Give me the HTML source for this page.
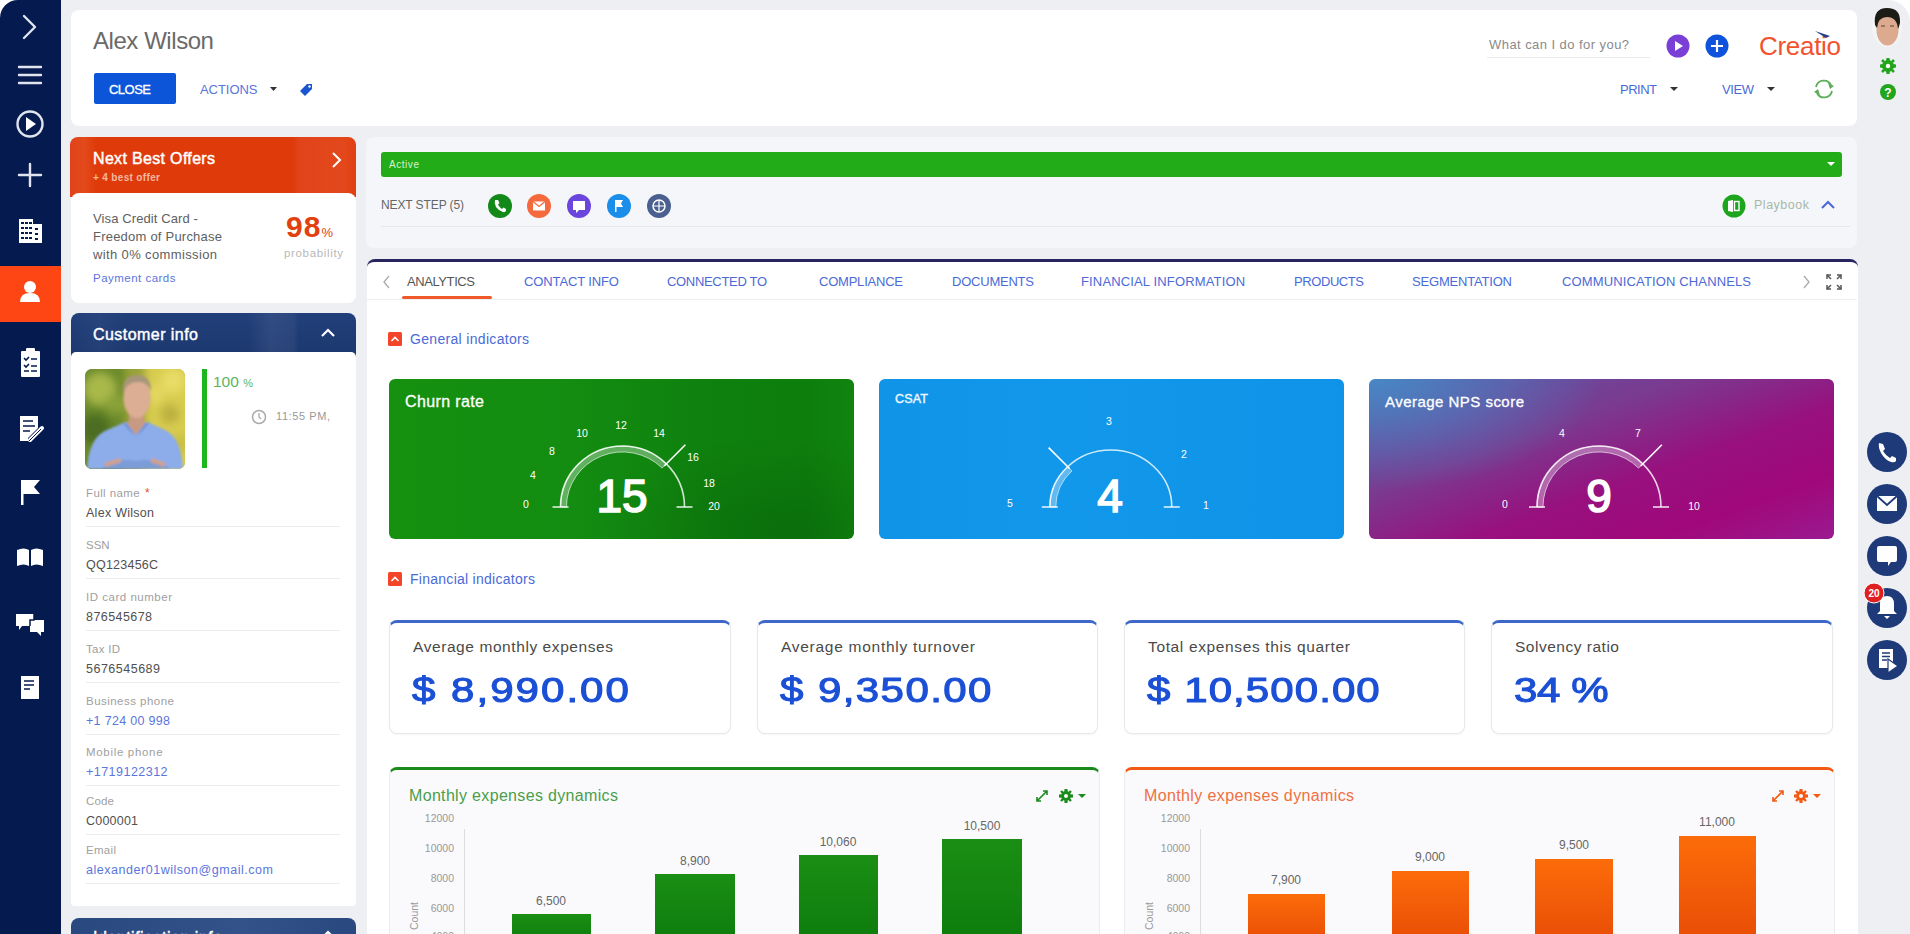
<!DOCTYPE html>
<html><head><meta charset="utf-8">
<style>
*{box-sizing:border-box;margin:0;padding:0}
html,body{width:1910px;height:934px;overflow:hidden;background:#edeff2;font-family:"Liberation Sans",sans-serif;}
.a{position:absolute}
.card{position:absolute;background:#fff;border-radius:8px}
.t{position:absolute;white-space:nowrap;line-height:1}
</style></head><body>
<!-- left sidebar -->
<div class="a" style="left:0;top:0;width:24px;height:24px;background:#fff"></div>
<div class="a" style="left:0;top:0;width:61px;height:934px;background:#051a4e;border-top-left-radius:18px"></div>
<div class="a" style="left:0;top:266px;width:61px;height:56px;background:#fd4614"></div>
<svg class="a" style="left:0;top:0" width="62" height="720" viewBox="0 0 62 720">
<g fill="none" stroke="#dfe4ee" stroke-width="2.4" stroke-linecap="round" stroke-linejoin="round">
<path d="M24 16 L35 27 L24 38"></path>
<path d="M19 67 H41 M19 75 H41 M19 83 H41"></path>
<circle cx="30" cy="124" r="12.5"></circle>
<path d="M19 175 H41 M30 164 V186"></path>
</g>
<path fill="#fff" d="M26 131 L26 117 L36 124 Z"></path>
<!-- building -->
<g fill="#fff"><rect x="19" y="219" width="14" height="24"></rect><rect x="33" y="224" width="9" height="19"></rect></g>
<g fill="#051a4e"><rect x="21" y="222" width="3" height="2"></rect><rect x="25" y="222" width="3" height="2"></rect><rect x="29" y="222" width="3" height="2"></rect>
<rect x="21" y="227" width="3" height="2"></rect><rect x="25" y="227" width="3" height="2"></rect><rect x="29" y="227" width="3" height="2"></rect>
<rect x="21" y="232" width="3" height="2"></rect><rect x="25" y="232" width="3" height="2"></rect><rect x="29" y="232" width="3" height="2"></rect>
<rect x="21" y="237" width="3" height="2"></rect><rect x="25" y="237" width="3" height="2"></rect><rect x="29" y="237" width="3" height="2"></rect>
<rect x="35" y="228" width="3" height="2"></rect><rect x="35" y="233" width="3" height="2"></rect><rect x="35" y="238" width="3" height="2"></rect></g>
<!-- person -->
<g fill="#fff"><circle cx="30" cy="287" r="6"></circle><path d="M20 302 Q20 293 30 293 Q40 293 40 302 Z"></path></g>
<!-- clipboard -->
<g fill="#fff"><rect x="21" y="351" width="19" height="26" rx="1"></rect><rect x="26" y="348" width="9" height="5" rx="1"></rect></g>
<g stroke="#051a4e" stroke-width="1.6" fill="none"><path d="M24 358 l2 2 l3 -3 M31 359 H37 M24 365 l2 2 l3 -3 M31 366 H37 M24 371 H29 M31 371 H37"></path></g>
<!-- edit doc -->
<g fill="#fff"><path d="M20 416 H38 V428 L28 438 V441 H20 Z"></path></g>
<g stroke="#051a4e" stroke-width="1.6"><path d="M23 421 H33 M23 426 H35 M23 431 H30"></path></g>
<path d="M30 440 L42 428" stroke="#fff" stroke-width="4" stroke-linecap="round"></path>
<path d="M29 441 L41 429" stroke="#051a4e" stroke-width="1"></path>
<!-- flag -->
<g fill="#fff"><rect x="21" y="480" width="2.5" height="25"></rect><path d="M23 480 H40 L34 487 L40 494 H23 Z"></path></g>
<!-- book -->
<path fill="#fff" d="M17 550 Q24 547 29 550 V566 Q24 563 17 566 Z M31 550 Q36 547 43 550 V566 Q36 563 31 566 Z"></path>
<!-- chat -->
<g fill="#fff"><path d="M16 614 H34 V626 H22 L19 630 V626 H16 Z"></path><path d="M30 620 H44 V632 H41 V636 L37 632 H30 Z"></path></g>
<path d="M34 614 V620 H30 V626" fill="none" stroke="#051a4e" stroke-width="1.5"></path>
<!-- doc -->
<g fill="#fff"><rect x="21" y="676" width="18" height="23"></rect></g>
<g stroke="#051a4e" stroke-width="1.6"><path d="M24 681 H34 M24 685 H34 M24 689 H30"></path></g>
</svg>

<!-- header card -->
<div class="card" style="left:71px;top:10px;width:1786px;height:116px;"></div>
<div class="t" style="left: 93px; top: 29px; font-size: 24px; color: rgb(106, 106, 106); letter-spacing: -0.44px;">Alex Wilson</div>
<div class="a" style="left:94px;top:73px;width:82px;height:31px;background:#0c55d8;border-radius:2px"></div>
<div class="t" style="left: 109px; top: 83px; font-size: 13px; color: rgb(255, 255, 255); -webkit-text-stroke: 0.3px rgb(255, 255, 255); letter-spacing: -0.52px;">CLOSE</div>
<div class="t" style="left: 200px; top: 83px; font-size: 13px; color: rgb(90, 116, 220); letter-spacing: -0.05px;">ACTIONS</div>
<svg class="a" style="left:269px;top:86px" width="10" height="6"><path d="M1 1 H8 L4.5 5 Z" fill="#333"></path></svg>
<svg class="a" style="left:298px;top:80px" width="18" height="18" viewBox="0 0 18 18"><path d="M2 11 L9 4 L14 4 L14 9 L7 16 Z" fill="#1a55d0"></path><circle cx="11.5" cy="6.5" r="1.2" fill="#fff"></circle></svg>
<div class="t" style="left: 1489px; top: 38px; font-size: 13px; color: rgb(138, 138, 138); letter-spacing: 0.44px;">What can I do for you?</div>
<div class="a" style="left:1487px;top:57px;width:163px;height:1px;background:#eaeaea"></div>
<svg class="a" style="left:1666px;top:34px" width="24" height="24" viewBox="0 0 24 24"><circle cx="12" cy="12" r="11.5" fill="#7a3fd6"></circle><path d="M9 7 L17 12 L9 17 Z" fill="#fff"></path></svg>
<svg class="a" style="left:1705px;top:34px" width="24" height="24" viewBox="0 0 24 24"><circle cx="12" cy="12" r="11.5" fill="#0f52dc"></circle><path d="M12 6 V18 M6 12 H18" stroke="#fff" stroke-width="2.2"></path></svg>
<div class="t" style="left: 1759px; top: 33px; font-size: 26px; color: rgb(242, 83, 46); letter-spacing: -0.3px;">Creatio</div>
<svg class="a" style="left:1814px;top:30px" width="18" height="10"><path d="M1 1 L16 6 L12 8 Z" fill="#263a8a"></path></svg>
<div class="t" style="left: 1620px; top: 83px; font-size: 13px; color: rgb(74, 106, 216); letter-spacing: -0.5px;">PRINT</div>
<svg class="a" style="left:1669px;top:86px" width="10" height="6"><path d="M1 1 H9 L5 5 Z" fill="#333"></path></svg>
<div class="t" style="left: 1722px; top: 83px; font-size: 13px; color: rgb(74, 106, 216); letter-spacing: -0.41px;">VIEW</div>
<svg class="a" style="left:1766px;top:86px" width="10" height="6"><path d="M1 1 H9 L5 5 Z" fill="#333"></path></svg>
<svg class="a" style="left:1812px;top:78px" width="24" height="22" viewBox="0 0 24 22"><g fill="none" stroke="#5cae5c" stroke-width="1.8"><path d="M4 9 A8 8 0 0 1 19 7"></path><path d="M20 13 A8 8 0 0 1 5 15"></path></g><path d="M16 5 L22 8 L18 11 Z M8 17 L2 14 L6 11 Z" fill="#5cae5c"></path></svg>

<!-- right strip -->
<div class="a" style="left:1885px;top:0;width:25px;height:25px;background:#fff"></div>
<div class="a" style="left:1858px;top:0;width:52px;height:60px;background:#edeff2;border-top-right-radius:22px"></div>
<svg class="a" style="left:1867px;top:3px" width="40" height="46" viewBox="0 0 40 46">
<defs><filter id="avb"><feGaussianBlur stdDeviation="0.7"></feGaussianBlur></filter></defs>
<ellipse cx="20" cy="24" rx="15" ry="20" fill="#f4f4f6"></ellipse>
<g filter="url(#avb)">
<ellipse cx="20.5" cy="27" rx="11" ry="15.5" fill="#dcaa8e"></ellipse>
<path d="M8 22 Q6 5 20 5 Q34 5 33 20 Q32 24 31 26 Q30 14 20 14 Q11 14 10 25 Z" fill="#1e1a18"></path>
<path d="M14 23 H18 M23 23 H27" stroke="#8a6050" stroke-width="1.5"></path>
</g>
</svg>
<svg class="a" style="left:1879px;top:57px" width="18" height="18" viewBox="0 0 18 18"><g fill="#22a51c"><circle cx="9" cy="9" r="6"></circle><path d="M7.5 1 H10.5 L11 4 H7 Z M7.5 17 H10.5 L11 14 H7 Z M1 7.5 V10.5 L4 11 V7 Z M17 7.5 V10.5 L14 11 V7 Z"></path><path d="M3 3 L5 5 M13 13 L15 15 M15 3 L13 5 M3 15 L5 13" stroke="#22a51c" stroke-width="2.5"></path></g><circle cx="9" cy="9" r="2.2" fill="#fff"></circle></svg>
<svg class="a" style="left:1879px;top:83px" width="18" height="18" viewBox="0 0 18 18"><circle cx="9" cy="9" r="8" fill="#22a51c"></circle><text x="9" y="13.5" font-size="12" font-weight="bold" text-anchor="middle" fill="#fff" font-family="Liberation Sans">?</text></svg>
<svg class="a" style="left:1865px;top:430px" width="45" height="260" viewBox="0 0 45 260">
<g fill="#1e3a78"><circle cx="22" cy="22" r="20"></circle><circle cx="22" cy="74" r="20"></circle><circle cx="22" cy="126" r="20"></circle><circle cx="22" cy="178" r="20"></circle><circle cx="22" cy="230" r="20"></circle></g>
<path fill="#fff" d="M14 13 Q13 17 16 23 Q20 30 26 32 Q30 33 31 31 L31 28 L27 26 L25 28 Q21 26 18 21 L20 19 L18 14 Z"></path>
<rect x="12" y="66" width="20" height="15" fill="#fff"></rect><path d="M12 66 L22 75 L32 66" stroke="#1e3a78" stroke-width="1.8" fill="none"></path>
<path fill="#fff" d="M14 116 H30 Q32 116 32 118 V130 Q32 132 30 132 H26 L23 136 V132 H14 Q12 132 12 130 V118 Q12 116 14 116 Z"></path>
<path fill="#fff" d="M22 166 Q15 166 15 174 V181 L12 184 H32 L29 181 V174 Q29 166 22 166 Z M19 186 H25 L22 189 Z"></path>
<path fill="#fff" d="M14 219 H28 V238 H14 Z"></path><path d="M17 223 H25 M17 226.5 H25 M17 230 H22" stroke="#1e3a78" stroke-width="1.3"></path><path fill="#fff" stroke="#1e3a78" stroke-width="1.2" d="M23 229 L33 236 L23 243 Z"></path>
</svg>
<svg class="a" style="left:1863px;top:582px" width="22" height="22"><circle cx="11" cy="11" r="10" fill="#e02020" stroke="#fff" stroke-width="1"></circle><text x="11" y="15" font-size="10" font-weight="bold" text-anchor="middle" fill="#fff" font-family="Liberation Sans">20</text></svg>

<!-- left column -->
<div class="a" style="left:70px;top:137px;width:286px;height:60px;background:linear-gradient(90deg,#e1421a 0%,#e34a1c 5%,#df3b0a 9%,#df3b0a 78%,#e1431a 80%,#e3481c 95%,#e04012 100%);border-radius:8px 8px 0 0"></div>
<div class="card" style="left:71px;top:193px;width:285px;height:110px;"></div>
<div class="t" style="left: 93px; top: 151px; font-size: 16px; -webkit-text-stroke: 0.45px rgb(255, 255, 255); color: rgb(255, 255, 255); letter-spacing: 0.33px;">Next Best Offers</div>
<div class="t" style="left: 93px; top: 173px; font-size: 10px; font-weight: bold; color: rgb(245, 184, 160); letter-spacing: 0.34px;">+ 4 best offer</div>
<svg class="a" style="left:331px;top:151px" width="12" height="18"><path d="M2 2 L9 9 L2 16" fill="none" stroke="#fff" stroke-width="2"></path></svg>
<div class="t" style="left: 93px; top: 212px; font-size: 13px; color: rgb(96, 96, 96); letter-spacing: 0.11px;">Visa Credit Card -</div>
<div class="t" style="left: 93px; top: 230px; font-size: 13px; color: rgb(96, 96, 96); letter-spacing: 0.22px;">Freedom of Purchase</div>
<div class="t" style="left: 93px; top: 248px; font-size: 13px; color: rgb(96, 96, 96); letter-spacing: 0.37px;">with 0% commission</div>
<div class="t" style="left: 93px; top: 273px; font-size: 11.5px; color: rgb(90, 118, 220); letter-spacing: 0.48px;">Payment cards</div>
<div class="t" style="left:286px;top:212px;font-size:30px;font-weight:bold;color:#e2410f;letter-spacing:1px">98<span style="font-size:13px;font-weight:normal;letter-spacing:0">%</span></div>
<div class="t" style="left: 284px; top: 248px; font-size: 11.5px; color: rgb(184, 184, 184); letter-spacing: 0.66px;">probability</div>

<div class="a" style="left:71px;top:313px;width:285px;height:44px;background:linear-gradient(90deg,rgba(255,255,255,0) 0%,rgba(255,255,255,0.03) 10%,rgba(255,255,255,0) 20%,rgba(255,255,255,0) 62%,rgba(255,255,255,0.07) 70%,rgba(255,255,255,0.05) 78%,rgba(255,255,255,0) 80%,rgba(255,255,255,0) 100%),linear-gradient(180deg,#213f7a 0%,#1c386f 100%);border-radius:8px 8px 0 0"></div>
<div class="card" style="left:71px;top:352px;width:285px;height:554px;border-radius:5px 5px 4px 4px"></div>
<div class="t" style="left: 93px; top: 327px; font-size: 16px; -webkit-text-stroke: 0.45px rgb(255, 255, 255); color: rgb(255, 255, 255); letter-spacing: 0.45px;">Customer info</div>
<svg class="a" style="left:320px;top:327px" width="16" height="12"><path d="M2 9 L8 3 L14 9" fill="none" stroke="#fff" stroke-width="2.2"></path></svg>
<svg class="a" style="left:85px;top:369px" width="100" height="100" viewBox="0 0 100 100">
<defs>
<clipPath id="pc"><rect x="0" y="0" width="100" height="100" rx="7"></rect></clipPath>
<filter id="pbl" x="-20%" y="-20%" width="140%" height="140%"><feGaussianBlur stdDeviation="4"></feGaussianBlur></filter>
<filter id="pbl2"><feGaussianBlur stdDeviation="0.8"></feGaussianBlur></filter>
</defs>
<g clip-path="url(#pc)">
<rect width="100" height="100" fill="#9aa23a"></rect>
<g filter="url(#pbl)">
<rect x="-10" y="-10" width="50" height="120" fill="#6a8a2a"></rect>
<circle cx="15" cy="20" r="16" fill="#a8b848"></circle>
<circle cx="10" cy="60" r="16" fill="#4e6e20"></circle>
<circle cx="30" cy="35" r="10" fill="#8aa238"></circle>
<rect x="60" y="-10" width="50" height="120" fill="#d8cc50"></rect>
<circle cx="88" cy="12" r="12" fill="#e8dc66"></circle>
<circle cx="85" cy="45" r="10" fill="#bcb040"></circle>
<circle cx="70" cy="25" r="9" fill="#e4d862"></circle>
<circle cx="95" cy="75" r="10" fill="#c8c048"></circle>
</g>
<g filter="url(#pbl2)">
<path d="M2 100 Q4 68 22 61 Q34 56 40 53 L62 53 Q70 56 80 61 Q96 68 98 100 Z" fill="#8cacea"></path>
<path d="M41 53 L51 66 L61 53 Z" fill="#c99a80"></path>
<path d="M37 53 L45 62 L51 67 L42 55 Z M65 53 L57 62 L51 67 L60 55 Z" fill="#6a8fd4"></path>
<rect x="44" y="42" width="15" height="14" fill="#c89a82"></rect>
<ellipse cx="52" cy="29" rx="13.5" ry="20" fill="#dcae94"></ellipse>
<path d="M38 24 Q37 6 52 6 Q66 6 66 22 Q62 12 52 13 Q42 13 38 24 Z" fill="#a8967a"></path>
<path d="M16 100 Q30 88 50 92 Q70 88 86 100 Z" fill="#7c9cd8"></path>
<path d="M20 96 L36 91 M66 91 L80 96" stroke="#d2a088" stroke-width="4"></path>
</g>
</g>
</svg>
<div class="a" style="left:202px;top:369px;width:5px;height:99px;background:#1db61d"></div>
<div class="t" style="left:213px;top:374px;font-size:15.5px;color:#5cb45c">100 <span style="font-size:11px">%</span></div>
<svg class="a" style="left:251px;top:409px" width="16" height="16"><circle cx="8" cy="8" r="6.5" fill="none" stroke="#aaa" stroke-width="1.5"></circle><path d="M8 4 V8 L10 10" stroke="#aaa" stroke-width="1.3" fill="none"></path></svg>
<div class="t" style="left: 276px; top: 411px; font-size: 11px; color: rgb(153, 153, 153); letter-spacing: 0.58px;">11:55 PM,</div>
<div class="t" style="left: 86px; top: 488px; font-size: 11.5px; color: rgb(160, 160, 160); letter-spacing: 0.38px;">Full name</div>
<div class="t" style="left:145px;top:487px;font-size:12px;color:#e8502a">*</div>
<div class="t" style="left: 86px; top: 507px; font-size: 12.5px; color: rgb(80, 80, 80); letter-spacing: 0.27px;">Alex Wilson</div>
<div class="a" style="left:86px;top:526px;width:254px;height:1px;background:#ececec"></div>
<div class="t" style="left:86px;top:540px;font-size:11.5px;color:#a0a0a0">SSN</div>
<div class="t" style="left: 86px; top: 559px; font-size: 12.5px; color: rgb(80, 80, 80); letter-spacing: 0.23px;">QQ123456C</div>
<div class="a" style="left:86px;top:578px;width:254px;height:1px;background:#ececec"></div>
<div class="t" style="left: 86px; top: 592px; font-size: 11.5px; color: rgb(160, 160, 160); letter-spacing: 0.52px;">ID card number</div>
<div class="t" style="left: 86px; top: 611px; font-size: 12.5px; color: rgb(80, 80, 80); letter-spacing: 0.43px;">876545678</div>
<div class="a" style="left:86px;top:630px;width:254px;height:1px;background:#ececec"></div>
<div class="t" style="left: 86px; top: 644px; font-size: 11.5px; color: rgb(160, 160, 160); letter-spacing: 0.28px;">Tax ID</div>
<div class="t" style="left: 86px; top: 663px; font-size: 12.5px; color: rgb(80, 80, 80); letter-spacing: 0.5px;">5676545689</div>
<div class="a" style="left:86px;top:682px;width:254px;height:1px;background:#ececec"></div>
<div class="t" style="left: 86px; top: 696px; font-size: 11.5px; color: rgb(160, 160, 160); letter-spacing: 0.47px;">Business phone</div>
<div class="t" style="left: 86px; top: 715px; font-size: 12.5px; color: rgb(90, 118, 220); letter-spacing: 0.31px;">+1 724 00 998</div>
<div class="a" style="left:86px;top:734px;width:254px;height:1px;background:#ececec"></div>
<div class="t" style="left: 86px; top: 747px; font-size: 11.5px; color: rgb(160, 160, 160); letter-spacing: 0.68px;">Mobile phone</div>
<div class="t" style="left: 86px; top: 766px; font-size: 12.5px; color: rgb(90, 118, 220); letter-spacing: 0.47px;">+1719122312</div>
<div class="a" style="left:86px;top:785px;width:254px;height:1px;background:#ececec"></div>
<div class="t" style="left: 86px; top: 796px; font-size: 11.5px; color: rgb(160, 160, 160); letter-spacing: 0.17px;">Code</div>
<div class="t" style="left: 86px; top: 815px; font-size: 12.5px; color: rgb(80, 80, 80); letter-spacing: 0.21px;">C000001</div>
<div class="a" style="left:86px;top:834px;width:254px;height:1px;background:#ececec"></div>
<div class="t" style="left: 86px; top: 845px; font-size: 11.5px; color: rgb(160, 160, 160); letter-spacing: 0.31px;">Email</div>
<div class="t" style="left: 86px; top: 864px; font-size: 12.5px; color: rgb(90, 118, 220); letter-spacing: 0.53px;">alexander01wilson@gmail.com</div>
<div class="a" style="left:86px;top:883px;width:254px;height:1px;background:#ececec"></div>
<div class="a" style="left:71px;top:918px;width:285px;height:30px;background:linear-gradient(90deg,#2a4880,#34528a 60%,#2a4880);border-radius:8px 8px 0 0"></div>
<div class="t" style="left: 93px; top: 930px; font-size: 16px; -webkit-text-stroke: 0.45px rgb(255, 255, 255); color: rgb(255, 255, 255); letter-spacing: 0.5px;">Identification info</div>
<svg class="a" style="left:320px;top:929px" width="16" height="12"><path d="M2 9 L8 3 L14 9" fill="none" stroke="#fff" stroke-width="2.2"></path></svg>

<!-- middle top card -->
<div class="a" style="left:366px;top:137px;width:1491px;height:111px;background:#f5f6f9;border-radius:8px"></div>
<div class="a" style="left:381px;top:152px;width:1461px;height:25px;background:#22ac18;border-radius:3px"></div>
<div class="t" style="left: 389px; top: 160px; font-size: 10px; color: rgb(216, 240, 212); letter-spacing: 0.55px;">Active</div>
<svg class="a" style="left:1826px;top:161px" width="10" height="6"><path d="M1 1 H9 L5 5 Z" fill="#fff"></path></svg>
<div class="t" style="left: 381px; top: 199px; font-size: 12px; color: rgb(102, 102, 102); letter-spacing: -0.1px;">NEXT STEP (5)</div>
<div class="a" style="left:381px;top:226px;width:1469px;height:1px;background:#e6e7ea"></div>
<svg class="a" style="left:486px;top:192px" width="186" height="28" viewBox="0 0 186 28">
<circle cx="14" cy="14" r="12" fill="#13891a"></circle>
<path fill="#fff" d="M9 8 Q8 11 10 15 Q13 19 17 20 Q19 20.5 20 19 L20 17 L17.5 15.5 L16 17 Q13.5 15.5 12 12.5 L13.5 11 L12 8 Z"></path>
<circle cx="53" cy="14" r="12" fill="#f46a3c"></circle>
<rect x="47" y="9.5" width="12" height="9" fill="#fff"></rect><path d="M47 9.5 L53 14.5 L59 9.5" stroke="#f46a3c" stroke-width="1.3" fill="none"></path>
<circle cx="93" cy="14" r="12" fill="#6a46dc"></circle>
<path fill="#fff" d="M87 9 H99 V18 H93 L90 21 V18 H87 Z"></path>
<circle cx="133" cy="14" r="12" fill="#1a8ee8"></circle>
<path fill="#fff" d="M129 8 V20 H130.5 V15 H137 L135 11.5 L137 8 Z"></path>
<circle cx="173" cy="14" r="12" fill="#4a6090"></circle>
<circle cx="173" cy="14" r="6" fill="none" stroke="#fff" stroke-width="1.5"></circle><path d="M167 14 H179 M173 8 V20" stroke="#fff" stroke-width="1.2"></path>
</svg>
<svg class="a" style="left:1722px;top:194px" width="24" height="24" viewBox="0 0 24 24"><circle cx="12" cy="12" r="11.5" fill="#1ea51e"></circle><path d="M6 7 L11 6 V18 L6 17 Z" fill="#fff"></path><rect x="12.5" y="7.5" width="4.5" height="9" fill="none" stroke="#fff" stroke-width="1.4"></rect></svg>
<div class="t" style="left: 1754px; top: 199px; font-size: 12.5px; color: rgb(168, 184, 168); letter-spacing: 0.51px;">Playbook</div>
<svg class="a" style="left:1820px;top:199px" width="16" height="12"><path d="M2 9 L8 3 L14 9" fill="none" stroke="#4a68d8" stroke-width="2"></path></svg>

<!-- tabs card -->
<div class="a" style="left:367px;top:259px;width:1491px;height:700px;background:#fff;border-top:3px solid #27255e;border-radius:8px 8px 0 0"></div>
<div class="a" style="left:366px;top:299px;width:1491px;height:1px;background:#eceef1"></div>
<div class="a" style="left:402px;top:296px;width:90px;height:3px;background:#f05a2a;border-radius:2px"></div>
<svg class="a" style="left:382px;top:274px" width="10" height="16"><path d="M7 2 L2 8 L7 14" fill="none" stroke="#aaa" stroke-width="1.3"></path></svg>
<svg class="a" style="left:1801px;top:274px" width="10" height="16"><path d="M3 2 L8 8 L3 14" fill="none" stroke="#aaa" stroke-width="1.3"></path></svg>
<svg class="a" style="left:1826px;top:274px" width="16" height="16"><g stroke="#555" stroke-width="1.5" fill="none"><path d="M1 5 V1 H5 M11 1 H15 V5 M15 11 V15 H11 M5 15 H1 V11"></path><path d="M1 1 L5 5 M15 1 L11 5 M15 15 L11 11 M1 15 L5 11"></path></g></svg>
<div class="t tab" style="left: 407px; top: 275px; font-size: 13px; color: rgb(85, 85, 85); letter-spacing: -0.41px;">ANALYTICS</div>
<div class="t tab" style="left: 524px; top: 275px; font-size: 13px; color: rgb(74, 106, 216); letter-spacing: -0.12px;">CONTACT INFO</div>
<div class="t tab" style="left: 667px; top: 275px; font-size: 13px; color: rgb(74, 106, 216); letter-spacing: -0.32px;">CONNECTED TO</div>
<div class="t tab" style="left: 819px; top: 275px; font-size: 13px; color: rgb(74, 106, 216); letter-spacing: -0.22px;">COMPLIANCE</div>
<div class="t tab" style="left: 952px; top: 275px; font-size: 13px; color: rgb(74, 106, 216); letter-spacing: -0.22px;">DOCUMENTS</div>
<div class="t tab" style="left: 1081px; top: 275px; font-size: 13px; color: rgb(74, 106, 216); letter-spacing: 0.15px;">FINANCIAL INFORMATION</div>
<div class="t tab" style="left: 1294px; top: 275px; font-size: 13px; color: rgb(74, 106, 216); letter-spacing: -0.42px;">PRODUCTS</div>
<div class="t tab" style="left: 1412px; top: 275px; font-size: 13px; color: rgb(74, 106, 216); letter-spacing: -0.19px;">SEGMENTATION</div>
<div class="t tab" style="left: 1562px; top: 275px; font-size: 13px; color: rgb(74, 106, 216); letter-spacing: 0.14px;">COMMUNICATION CHANNELS</div>

<svg class="a" style="left:388px;top:332px" width="14" height="14"><rect x="0" y="0" width="14" height="14" rx="1.5" fill="#f2452a"></rect><path d="M3.5 9 L7 5.5 L10.5 9" stroke="#fff" stroke-width="1.6" fill="none"></path></svg>
<div class="t" style="left: 410px; top: 332px; font-size: 14px; color: rgb(74, 106, 216); letter-spacing: 0.32px;">General indicators</div>
<svg class="a" style="left:388px;top:572px" width="14" height="14"><rect x="0" y="0" width="14" height="14" rx="1.5" fill="#f2452a"></rect><path d="M3.5 9 L7 5.5 L10.5 9" stroke="#fff" stroke-width="1.6" fill="none"></path></svg>
<div class="t" style="left: 410px; top: 572px; font-size: 14px; color: rgb(74, 106, 216); letter-spacing: 0.27px;">Financial indicators</div>

<!-- gauge cards -->
<div class="a" style="left:389px;top:379px;width:465px;height:160px;background:radial-gradient(ellipse 40% 60% at 85% 95%,rgba(0,40,0,0.18),rgba(0,40,0,0) 100%),linear-gradient(90deg,#15900f 0%,#138c11 40%,#0e800e 70%,#0d7e0d 90%,#10840f 100%);border-radius:6px;overflow:hidden"><svg class="a" style="left:0;top:0" width="465" height="160" viewBox="0 0 465 160"><path d="M171.5 128.0 A62 61 0 0 1 295.5 128.0" fill="none" stroke="rgba(255,255,255,0.8)" stroke-width="1.6"></path><path d="M171.5 128.0 A62 61 0 0 1 277.3 84.9 L273.1 89.1 A56 55 0 0 0 177.5 128.0 Z" fill="rgba(255,255,255,0.33)" stroke="rgba(255,255,255,0.6)" stroke-width="1"></path><path d="M163.5 128.0 H179.5 M287.5 128.0 H303.5" stroke="rgba(255,255,255,0.9)" stroke-width="1.6"></path><path d="M275.2 87.0 L296.4 65.8" stroke="#fff" stroke-width="1.6"></path></svg><div class="t" style="left: 16px; top: 15px; font-size: 16px; -webkit-text-stroke: 0.3px rgb(255, 255, 255); color: rgb(255, 255, 255); letter-spacing: 0.38px;">Churn rate</div><div class="t" style="left:117px;width:40px;text-align:center;top:120px;font-size:10.5px;color:#fff">0</div><div class="t" style="left:124px;width:40px;text-align:center;top:91px;font-size:10.5px;color:#fff">4</div><div class="t" style="left:143px;width:40px;text-align:center;top:67px;font-size:10.5px;color:#fff">8</div><div class="t" style="left:173px;width:40px;text-align:center;top:49px;font-size:10.5px;color:#fff">10</div><div class="t" style="left:212px;width:40px;text-align:center;top:41px;font-size:10.5px;color:#fff">12</div><div class="t" style="left:250px;width:40px;text-align:center;top:49px;font-size:10.5px;color:#fff">14</div><div class="t" style="left:284px;width:40px;text-align:center;top:73px;font-size:10.5px;color:#fff">16</div><div class="t" style="left:300px;width:40px;text-align:center;top:99px;font-size:10.5px;color:#fff">18</div><div class="t" style="left:305px;width:40px;text-align:center;top:122px;font-size:10.5px;color:#fff">20</div><div class="t" style="left:173px;width:120px;text-align:center;top:94px;font-size:46px;color:#fff;-webkit-text-stroke:1.6px #fff">15</div></div>
<div class="a" style="left:879px;top:379px;width:465px;height:160px;background:linear-gradient(90deg,#0f94e8 0%,#1298ea 40%,#0e93e8 100%);border-radius:6px;overflow:hidden"><svg class="a" style="left:0;top:0" width="465" height="160" viewBox="0 0 465 160"><path d="M170.8 128.0 A61 57 0 0 1 292.8 128.0" fill="none" stroke="rgba(255,255,255,0.8)" stroke-width="1.6"></path><path d="M170.8 128.0 A61 57 0 0 1 188.7 87.7 L192.9 91.9 A55 51 0 0 0 176.8 128.0 Z" fill="rgba(255,255,255,0.33)" stroke="rgba(255,255,255,0.6)" stroke-width="1"></path><path d="M162.8 128.0 H178.8 M284.8 128.0 H300.8" stroke="rgba(255,255,255,0.9)" stroke-width="1.6"></path><path d="M190.8 89.8 L169.6 68.6" stroke="#fff" stroke-width="1.6"></path></svg><div class="t" style="left: 16px; top: 14px; font-size: 12.5px; -webkit-text-stroke: 0.4px rgb(238, 246, 255); color: rgb(238, 246, 255); letter-spacing: 0.19px;">CSAT</div><div class="t" style="left:111px;width:40px;text-align:center;top:119px;font-size:10.5px;color:#fff">5</div><div class="t" style="left:210px;width:40px;text-align:center;top:37px;font-size:10.5px;color:#fff">3</div><div class="t" style="left:285px;width:40px;text-align:center;top:70px;font-size:10.5px;color:#fff">2</div><div class="t" style="left:307px;width:40px;text-align:center;top:121px;font-size:10.5px;color:#fff">1</div><div class="t" style="left:171px;width:120px;text-align:center;top:94px;font-size:46px;color:#fff;-webkit-text-stroke:1.6px #fff">4</div></div>
<div class="a" style="left:1369px;top:379px;width:465px;height:160px;background:radial-gradient(ellipse 50% 70% at 0% 0%,rgba(70,140,200,0.9),rgba(70,140,200,0) 100%),linear-gradient(160deg,#5a5aa8 0%,#7a3a90 35%,#98107e 60%,#a0087a 80%,#9a1a90 100%);border-radius:6px;overflow:hidden"><svg class="a" style="left:0;top:0" width="465" height="160" viewBox="0 0 465 160"><path d="M168.0 128.0 A62 61 0 0 1 292.0 128.0" fill="none" stroke="rgba(255,255,255,0.8)" stroke-width="1.6"></path><path d="M168.0 128.0 A62 61 0 0 1 273.8 84.9 L269.6 89.1 A56 55 0 0 0 174.0 128.0 Z" fill="rgba(255,255,255,0.33)" stroke="rgba(255,255,255,0.6)" stroke-width="1"></path><path d="M160.0 128.0 H176.0 M284.0 128.0 H300.0" stroke="rgba(255,255,255,0.9)" stroke-width="1.6"></path><path d="M271.7 87.0 L292.9 65.8" stroke="#fff" stroke-width="1.6"></path></svg><div class="t" style="left: 16px; top: 15px; font-size: 15px; -webkit-text-stroke: 0.3px rgb(255, 255, 255); color: rgb(255, 255, 255); letter-spacing: 0.47px;">Average NPS score</div><div class="t" style="left:116px;width:40px;text-align:center;top:120px;font-size:10.5px;color:#fff">0</div><div class="t" style="left:173px;width:40px;text-align:center;top:49px;font-size:10.5px;color:#fff">4</div><div class="t" style="left:249px;width:40px;text-align:center;top:49px;font-size:10.5px;color:#fff">7</div><div class="t" style="left:305px;width:40px;text-align:center;top:122px;font-size:10.5px;color:#fff">10</div><div class="t" style="left:170px;width:120px;text-align:center;top:94px;font-size:46px;color:#fff;-webkit-text-stroke:1.6px #fff">9</div></div>

<!-- fin cards -->
<div class="a" style="left:389px;top:620px;width:342px;height:114px;background:#fff;border:1px solid #e6e8ec;border-top:3px solid #3d68c8;border-radius:8px;box-shadow:0 1px 2px rgba(0,0,0,0.04)"></div>
<div class="t" style="left: 413px; top: 639px; font-size: 15.5px; color: rgb(74, 74, 74); letter-spacing: 0.58px;">Average monthly expenses</div>
<div class="t fv" style="left:412px;top:672px;font-size:35px;color:#1b50d6;-webkit-text-stroke:1.1px #1b50d6;letter-spacing:1.7px;transform:scaleX(1.2);transform-origin:0 0">$ 8,990.00</div>
<div class="a" style="left:757px;top:620px;width:341px;height:114px;background:#fff;border:1px solid #e6e8ec;border-top:3px solid #3d68c8;border-radius:8px;box-shadow:0 1px 2px rgba(0,0,0,0.04)"></div>
<div class="t" style="left: 781px; top: 639px; font-size: 15.5px; color: rgb(74, 74, 74); letter-spacing: 0.73px;">Average monthly turnover</div>
<div class="t fv" style="left:780px;top:672px;font-size:35px;color:#1b50d6;-webkit-text-stroke:1.1px #1b50d6;letter-spacing:1.2px;transform:scaleX(1.2);transform-origin:0 0">$ 9,350.00</div>
<div class="a" style="left:1124px;top:620px;width:341px;height:114px;background:#fff;border:1px solid #e6e8ec;border-top:3px solid #3d68c8;border-radius:8px;box-shadow:0 1px 2px rgba(0,0,0,0.04)"></div>
<div class="t" style="left: 1148px; top: 639px; font-size: 15.5px; color: rgb(74, 74, 74); letter-spacing: 0.64px;">Total expenses this quarter</div>
<div class="t fv" style="left:1147px;top:672px;font-size:35px;color:#1b50d6;-webkit-text-stroke:1.1px #1b50d6;letter-spacing:0.9px;transform:scaleX(1.2);transform-origin:0 0">$ 10,500.00</div>
<div class="a" style="left:1491px;top:620px;width:342px;height:114px;background:#fff;border:1px solid #e6e8ec;border-top:3px solid #3d68c8;border-radius:8px;box-shadow:0 1px 2px rgba(0,0,0,0.04)"></div>
<div class="t" style="left: 1515px; top: 639px; font-size: 15.5px; color: rgb(74, 74, 74); letter-spacing: 0.51px;">Solvency ratio</div>
<div class="t fv" style="left:1514px;top:672px;font-size:35px;color:#1b50d6;-webkit-text-stroke:1.1px #1b50d6;letter-spacing:-0.3px;transform:scaleX(1.2);transform-origin:0 0">34 %</div>
<div class="a" style="left:389px;top:767px;width:711px;height:200px;background:#fafafc;border:1px solid #ebecf0;border-top:3px solid #1a8a1a;border-radius:8px"></div>
<div class="t" style="left: 409px; top: 788px; font-size: 16px; color: rgb(74, 158, 74); letter-spacing: 0.33px;">Monthly expenses dynamics</div>
<svg class="a" style="left:1035px;top:789px" width="14" height="14"><path d="M2 12 L12 2 M8 2 H12 V6 M2 8 V12 H6" stroke="#1a8a1a" stroke-width="1.6" fill="none"></path></svg>
<svg class="a" style="left:1058px;top:788px" width="16" height="16" viewBox="0 0 16 16"><g fill="#1a8a1a"><circle cx="8" cy="8" r="5"></circle><path d="M6.6 1 H9.4 L9.8 3.5 H6.2 Z M6.6 15 H9.4 L9.8 12.5 H6.2 Z M1 6.6 V9.4 L3.5 9.8 V6.2 Z M15 6.6 V9.4 L12.5 9.8 V6.2 Z"></path><path d="M3 3 L5 5 M11 11 L13 13 M13 3 L11 5 M3 13 L5 11" stroke="#1a8a1a" stroke-width="2.4"></path></g><circle cx="8" cy="8" r="2" fill="#fafafc"></circle></svg>
<svg class="a" style="left:1078px;top:794px" width="8" height="5"><path d="M0 0 H8 L4 4 Z" fill="#1a8a1a"></path></svg>
<div class="t" style="left:404px;width:50px;text-align:right;top:813px;font-size:10.5px;color:#999">12000</div>
<div class="t" style="left:404px;width:50px;text-align:right;top:843px;font-size:10.5px;color:#999">10000</div>
<div class="t" style="left:404px;width:50px;text-align:right;top:873px;font-size:10.5px;color:#999">8000</div>
<div class="t" style="left:404px;width:50px;text-align:right;top:903px;font-size:10.5px;color:#999">6000</div>
<div class="t" style="left:404px;width:50px;text-align:right;top:931px;font-size:10.5px;color:#999">4000</div>
<div class="a" style="left:464px;top:829px;width:1px;height:120px;background:#ddd"></div>
<div class="t" style="left:409px;font-size:10.5px;color:#999;transform:rotate(-90deg);transform-origin:0 0;top:930px">Count</div>
<div class="a" style="left:512px;top:914px;width:79px;height:30px;background:linear-gradient(180deg,#1a8e14,#0c7c0c)"></div>
<div class="t" style="left:511px;width:80px;text-align:center;top:895px;font-size:12px;color:#666">6,500</div>
<div class="a" style="left:655px;top:874px;width:80px;height:70px;background:linear-gradient(180deg,#1a8e14,#0c7c0c)"></div>
<div class="t" style="left:655px;width:80px;text-align:center;top:855px;font-size:12px;color:#666">8,900</div>
<div class="a" style="left:799px;top:855px;width:79px;height:89px;background:linear-gradient(180deg,#1a8e14,#0c7c0c)"></div>
<div class="t" style="left:798px;width:80px;text-align:center;top:836px;font-size:12px;color:#666">10,060</div>
<div class="a" style="left:942px;top:839px;width:80px;height:105px;background:linear-gradient(180deg,#1a8e14,#0c7c0c)"></div>
<div class="t" style="left:942px;width:80px;text-align:center;top:820px;font-size:12px;color:#666">10,500</div>
<div class="a" style="left:1124px;top:767px;width:711px;height:200px;background:#fafafc;border:1px solid #ebecf0;border-top:3px solid #f25a14;border-radius:8px"></div>
<div class="t" style="left: 1144px; top: 788px; font-size: 16px; color: rgb(240, 112, 64); letter-spacing: 0.38px;">Monthly expenses dynamics</div>
<svg class="a" style="left:1771px;top:789px" width="14" height="14"><path d="M2 12 L12 2 M8 2 H12 V6 M2 8 V12 H6" stroke="#f25a14" stroke-width="1.6" fill="none"></path></svg>
<svg class="a" style="left:1793px;top:788px" width="16" height="16" viewBox="0 0 16 16"><g fill="#f25a14"><circle cx="8" cy="8" r="5"></circle><path d="M6.6 1 H9.4 L9.8 3.5 H6.2 Z M6.6 15 H9.4 L9.8 12.5 H6.2 Z M1 6.6 V9.4 L3.5 9.8 V6.2 Z M15 6.6 V9.4 L12.5 9.8 V6.2 Z"></path><path d="M3 3 L5 5 M11 11 L13 13 M13 3 L11 5 M3 13 L5 11" stroke="#f25a14" stroke-width="2.4"></path></g><circle cx="8" cy="8" r="2" fill="#fafafc"></circle></svg>
<svg class="a" style="left:1813px;top:794px" width="8" height="5"><path d="M0 0 H8 L4 4 Z" fill="#f25a14"></path></svg>
<div class="t" style="left:1140px;width:50px;text-align:right;top:813px;font-size:10.5px;color:#999">12000</div>
<div class="t" style="left:1140px;width:50px;text-align:right;top:843px;font-size:10.5px;color:#999">10000</div>
<div class="t" style="left:1140px;width:50px;text-align:right;top:873px;font-size:10.5px;color:#999">8000</div>
<div class="t" style="left:1140px;width:50px;text-align:right;top:903px;font-size:10.5px;color:#999">6000</div>
<div class="t" style="left:1140px;width:50px;text-align:right;top:931px;font-size:10.5px;color:#999">4000</div>
<div class="a" style="left:1200px;top:829px;width:1px;height:120px;background:#ddd"></div>
<div class="t" style="left:1144px;font-size:10.5px;color:#999;transform:rotate(-90deg);transform-origin:0 0;top:930px">Count</div>
<div class="a" style="left:1248px;top:894px;width:77px;height:50px;background:linear-gradient(180deg,#fc6c0a,#e84c06)"></div>
<div class="t" style="left:1246px;width:80px;text-align:center;top:874px;font-size:12px;color:#666">7,900</div>
<div class="a" style="left:1392px;top:871px;width:77px;height:73px;background:linear-gradient(180deg,#fc6c0a,#e84c06)"></div>
<div class="t" style="left:1390px;width:80px;text-align:center;top:851px;font-size:12px;color:#666">9,000</div>
<div class="a" style="left:1535px;top:859px;width:78px;height:85px;background:linear-gradient(180deg,#fc6c0a,#e84c06)"></div>
<div class="t" style="left:1534px;width:80px;text-align:center;top:839px;font-size:12px;color:#666">9,500</div>
<div class="a" style="left:1679px;top:836px;width:77px;height:108px;background:linear-gradient(180deg,#fc6c0a,#e84c06)"></div>
<div class="t" style="left:1677px;width:80px;text-align:center;top:816px;font-size:12px;color:#666">11,000</div>

</body></html>
